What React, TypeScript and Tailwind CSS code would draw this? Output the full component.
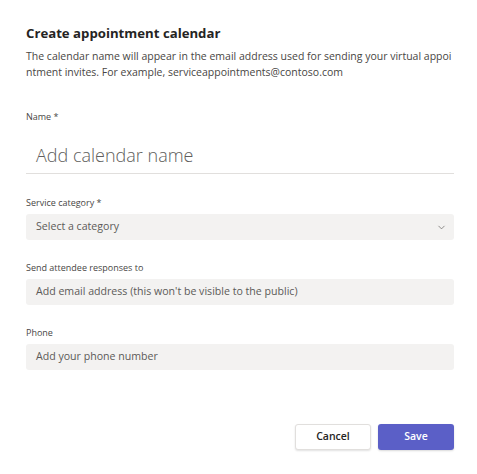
import { ChevronDown } from "lucide-react";

const font = { fontFamily: '"Open Sans", "Noto Sans", sans-serif' };

const Field = ({ label, placeholder, select }: { label: string; placeholder: string; select?: boolean }) => (
  <div className="flex flex-col">
    <label className="text-[9px] leading-[12px] text-[#484644] mb-[5px]">{label}</label>
    <div className="h-[26px] bg-[#f3f2f1] rounded-[3px] flex items-center justify-between pl-[10px] pr-[7px]">
      <span className="text-[10.6px] text-[#5c5a58]">{placeholder}</span>
      {select && <ChevronDown size={11} strokeWidth={1.5} className="text-[#605e5c]" />}
    </div>
  </div>
);

export default function App() {
  return (
    <div className="w-[477px] h-[474px] bg-white flex flex-col pl-[26px] pr-[23px] pt-[23px]" style={font}>
      <h1 className="text-[13.2px] leading-[20px] font-bold text-[#252423]">Create appointment calendar</h1>
      <p className="mt-[5px] text-[10.5px] leading-[16px] text-[#484644] break-all">
        The calendar name will appear in the email address used for sending your virtual appointment invites. For example, serviceappointments@contoso.com
      </p>

      <div className="mt-[31px] flex flex-col">
        <label className="text-[9px] leading-[12px] text-[#484644]">Name *</label>
        <div className="mt-[14px] h-[37px] border-b border-[#e1dfdd] flex items-center px-[10px]">
          <span className="text-[18px] text-[#605e5c] font-light">Add calendar name</span>
        </div>
      </div>

      <div className="mt-[23px] flex flex-col gap-[22px]">
        <Field label="Service category *" placeholder="Select a category" select />
        <Field label="Send attendee responses to" placeholder="Add email address (this won't be visible to the public)" />
        <Field label="Phone" placeholder="Add your phone number" />
      </div>

      <div className="mt-auto mb-[24px] flex justify-end gap-[7px]">
        <button className="w-[76px] h-[26px] rounded-[3px] bg-white border border-[#e1dfdd] shadow-[0_1px_2px_rgba(0,0,0,0.12)] text-[10.5px] font-semibold text-[#252423]">
          Cancel
        </button>
        <button className="w-[76px] h-[26px] rounded-[3px] bg-[#5b5fc7] shadow-[0_1px_2px_rgba(0,0,0,0.15)] text-[10.5px] font-semibold text-white">
          Save
        </button>
      </div>
    </div>
  );
}
